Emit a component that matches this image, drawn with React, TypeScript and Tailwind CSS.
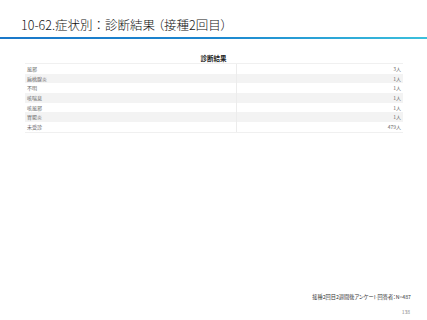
import React from "react";

const rows: [string, string][] = [
  ["風邪", "3人"],
  ["扁桃腺炎", "1人"],
  ["不明", "1人"],
  ["咳喘息", "1人"],
  ["咳風邪", "1人"],
  ["胃腸炎", "1人"],
  ["未受診", "479人"],
];

export default function App() {
  return (
    <div
      className="w-[427px] h-[320px] bg-white flex flex-col overflow-hidden"
      style={{ fontFamily: '"Noto Sans CJK JP", "Liberation Sans", sans-serif' }}
    >
      <div className="h-[37px] pl-[21px] pt-[17px] text-[12.5px] leading-[16px] font-light text-[#111] [font-feature-settings:'palt']">
        10-62.症状別<span className="[font-feature-settings:normal]">：</span>診断結果 （接種2回目）
      </div>
      <div className="h-[2px] w-full bg-gradient-to-r from-[#1a78c9] via-[#1c86cf] to-[#3cc0dc]" />
      <div className="pt-[15px] text-center text-[6.5px] leading-[8px] font-bold text-[#222]">診断結果</div>
      <div className="mt-[1px] ml-[25px] w-[378px] flex flex-col border-b border-t border-[#f0f0f0]">
        {rows.map(([k, v], i) => (
          <div
            key={k}
            className={`flex h-[9.7px] text-[5px] leading-[9.7px] text-[#666] ${i % 2 === 1 ? "bg-[#f3f3f3]" : "bg-white"}`}
          >
            <div className="w-[212px] pl-[2px] border-r border-[#ececec]">{k}</div>
            <div className="flex-1 text-right pr-[2px]">{v}</div>
          </div>
        ))}
      </div>
      <div className="flex-1" />
      <div className="pr-[16px] text-right text-[5.2px] leading-[8px] text-[#333] [font-feature-settings:'palt']">
        接種2回目2週間後アンケート回答者：N=487
      </div>
      <div className="pr-[17px] pt-[7px] pb-[5px] text-right text-[5px] leading-[7px] text-[#888]">138</div>
    </div>
  );
}
